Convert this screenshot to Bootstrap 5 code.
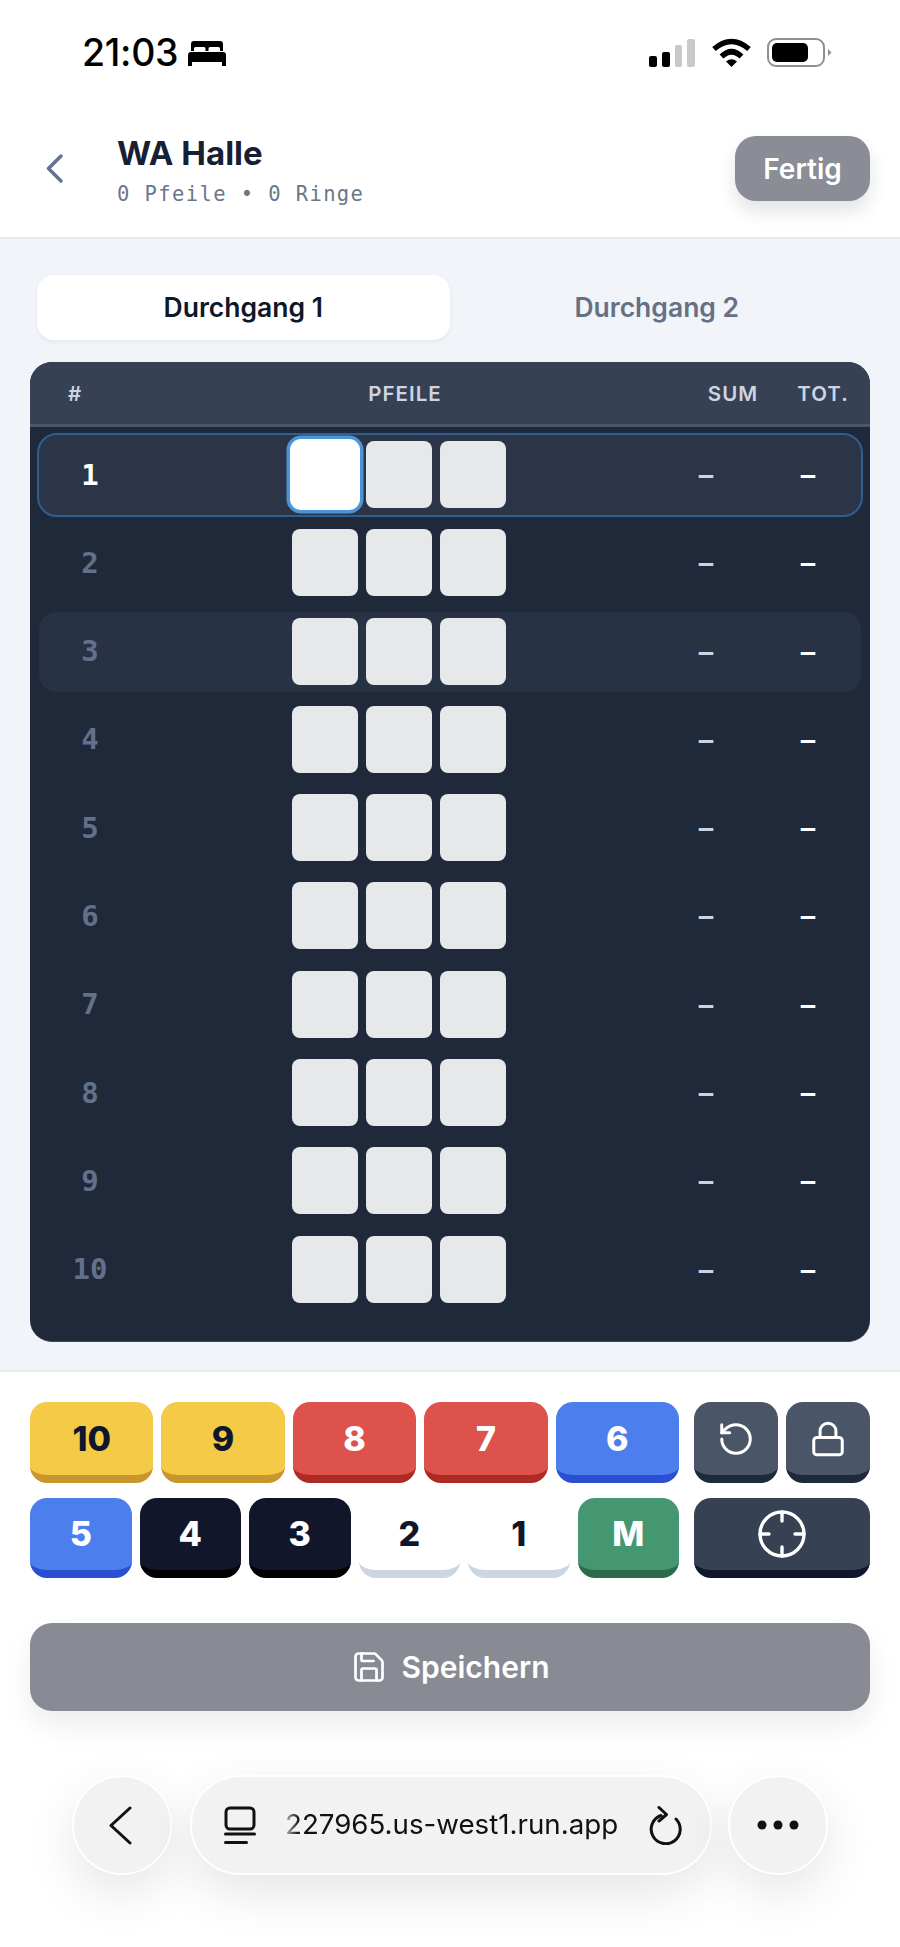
<!DOCTYPE html>
<html lang="de">

<head>
    <meta charset="UTF-8" />
    <title>WA Halle</title>
    <link href="https://cdn.jsdelivr.net/npm/bootstrap@5.3.2/dist/css/bootstrap.min.css" rel="stylesheet" />
    <style>
        body { width: 900px; height: 1947px; overflow: hidden; background: #fff; font-family: "Inter", "Liberation Sans", sans-serif; }
        .mono { font-family: "DejaVu Sans Mono", "Liberation Mono", monospace; }

        .status-row { height: 106px; padding: 38px 68px 0 82px; }
        .status-time { font-size: 37.5px; line-height: 30px; font-weight: 500; color: #000; letter-spacing: -.3px; margin-right: 2px; }

        .top-nav { height: 133px; padding: 30px 30px 0 46px; border-bottom: 2px solid #e6e9ef; }
        .back-link { width: 71px; padding-top: 2px; }
        .title-main { font-size: 33px; line-height: 38px; font-weight: 700; color: #172033; margin: -2px 0 8px; }
        .title-sub { font-size: 20.5px; line-height: 28px; letter-spacing: 1.4px; color: #6b7688; }
        .done-btn { width: 135px; height: 65px; border: 0; border-radius: 21px; background: #8a8c96; color: #fff; font-size: 28px; font-weight: 600; box-shadow: 0 10px 18px rgba(15, 23, 42, .12); }

        .main-area { height: 1133px; padding: 36px 30px 0; background: #f1f4f9; border-bottom: 2px solid #e8ebf0; }
        .tab-row { height: 65px; padding: 0 7px; margin-bottom: 22px; }
        .tab-item { flex: 1 1 0; padding-top: 1px; border-radius: 17px; font-size: 26.5px; font-weight: 600; color: #667085; }
        .tab-item.on { background: #fff; color: #0f172a; box-shadow: 0 2px 5px rgba(15, 23, 42, .06); margin-right: 1px; }

        .score-card { height: 980px; border-radius: 22px; background: #1f293a; overflow: hidden; border-bottom: 1px solid #3a4559; }
        .score-head { height: 65px; padding-top: 3px; background: #364153; border-bottom: 3px solid #4a5567; color: #cdd5e1; font-size: 20.5px; font-weight: 600; letter-spacing: 1px; display: grid; grid-template-columns: 90px 1fr 86px 94px; align-items: center; text-align: center; }
        .score-body { padding: 6px 7px 0; display: flex; flex-direction: column; gap: 4.3px; }
        .score-row { height: 84px; border: 2px solid transparent; border-radius: 20px; background-clip: padding-box; display: grid; grid-template-columns: 102px 1fr 98px 106px; align-items: center; text-align: center; }
        .score-row.on { background-color: #2b3547; border-color: #2e5f93; background-clip: border-box; }
        .score-row.tint { background-color: #283245; }
        .row-no { font-size: 29px; font-weight: 700; line-height: 1; color: #64708a; }
        .score-row.on .row-no { color: #fff; }
        .arrow-cells { display: flex; justify-content: center; gap: 7.5px; margin-top: -1px; }
        .arrow-cell { width: 66.5px; height: 67px; border-radius: 8px; background: #e7e8ea; }
        .arrow-cell.on { background: #fff; box-shadow: 0 0 0 2px #fff, 0 0 0 5.5px #4b95d6; border-radius: 9px; }
        .val-sum, .val-tot { font-size: 24px; font-weight: 700; line-height: 1; }
        .val-sum { color: #cbd5e1; }
        .val-tot { color: #fff; }

        .pad-area { padding: 30px 30px 0; }
        .pad-row { display: flex; gap: 15px; }
        .pad-row + .pad-row { margin-top: 15px; }
        .pad-left { flex: 0 0 649px; display: grid; gap: 8px; grid-template-columns: repeat(5, 1fr); }
        .pad-row + .pad-row .pad-left { grid-template-columns: repeat(6, 1fr); }
        .pad-right { flex: 1; display: flex; gap: 8px; }
        .pad-key { flex: 1; height: 81px; padding: 0; border: 0; border-bottom: 8px solid; border-radius: 17px; font-size: 34px; font-weight: 800; line-height: 1; display: flex; align-items: center; justify-content: center; }
        .pad-row + .pad-row .pad-key { height: 80px; }
        .key-gold { background: #f4ca47; border-color: #c8962c; color: #0f172a; }
        .key-red { background: #dd524b; border-color: #ae2a25; color: #fff; }
        .key-blue { background: #4c7eee; border-color: #2a4fd0; color: #fff; }
        .key-dark { background: #11162a; border-color: #000; color: #fff; }
        .key-white { background: #fff; border-color: #cdd6e0; color: #0f172a; }
        .key-green { background: #449770; border-color: #2c6a4b; color: #fff; }
        .key-slate { background: #4b5568; border-color: #1e293b; color: #fff; }
        .key-steel { background: #374154; border-color: #0f172a; color: #fff; }

        .save-btn { width: 100%; height: 88px; margin-top: 45px; border: 0; border-radius: 22px; background: #888a94; color: #fff; font-size: 30px; font-weight: 600; gap: 15px; box-shadow: 0 14px 28px rgba(15, 23, 42, .08); }

        .browser-bar { margin: 64px 73px 0 72px; height: 100px; }
        .bar-pill { height: 100px; background: #f2f2f3; border: 2px solid #fff; border-radius: 50px; box-shadow: 0 18px 50px rgba(0, 0, 0, .1); }
        .bar-round { width: 100px; flex: 0 0 100px; }
        .bar-url { flex: 1; margin: 0 16px 0 18px; padding: 0 28px 0 32px; }
        .url-text { width: 334px; margin: 0 30px 0 29px; font-size: 27.7px; color: #111; white-space: nowrap; overflow: hidden; -webkit-mask-image: linear-gradient(90deg, rgba(0, 0, 0, .25) 0, #000 14px); mask-image: linear-gradient(90deg, rgba(0, 0, 0, .25) 0, #000 14px); }
    </style>
</head>

<body>
    <div class="status-row d-flex justify-content-between align-items-start">
        <div class="d-flex align-items-center gap-2">
            <span class="status-time">21:03</span>
            <svg width="38" height="25" viewBox="0 0 38 25" fill="#000">
                <path d="M6 0h26a3 3 0 0 1 3 3v7h-3V7.500a1.500 1.500 0 0 0-1.500-1.500H22a1.500 1.500 0 0 0-1.500 1.500V10h-3V7.500A1.500 1.500 0 0 0 16 6H7.500A1.500 1.500 0 0 0 6 7.500V10H3V3a3 3 0 0 1 3-3z" />
                <path d="M3 11h32a3 3 0 0 1 3 3v7H0v-7a3 3 0 0 1 3-3zM0 21h4v4H0zM34 21h4v4h-4z" />
            </svg>
        </div>
        <div class="d-flex align-items-start">
            <svg width="46" height="28" viewBox="0 0 46 28" style="margin-right:16px;margin-top:1px">
                <rect x="0" y="17" width="8" height="11" rx="2" fill="#000" />
                <rect x="13" y="13" width="8" height="15" rx="2" fill="#000" />
                <rect x="26" y="6" width="7" height="22" rx="2" fill="#c9c9c9" />
                <rect x="38" y="0" width="8" height="28" rx="2" fill="#c9c9c9" />
            </svg>
            <svg width="41" height="29" viewBox="0 0 39 29" fill="none" stroke="#000" stroke-width="5.500">
                <path d="M2 11Q19.500-4 37 11" />
                <path d="M9.500 18.500Q19.500 9 29.500 18.500" />
                <path d="M14 23.500Q19.500 19 25 23.500L19.500 29z" fill="#000" stroke="none" />
            </svg>
            <svg width="65" height="29" viewBox="0 0 65 29" style="margin-left:15px">
                <rect x="1" y="1" width="56" height="27" rx="8" fill="none" stroke="#8f8f8f" stroke-width="2" />
                <rect x="5" y="5" width="36" height="19" rx="5" fill="#000" />
                <path d="M61 11l3.500 3.500-3.500 3.500z" fill="#8f8f8f" />
            </svg>
        </div>
    </div>

    <div class="top-nav d-flex align-items-start">
        <div class="back-link">
            <svg width="17" height="29" viewBox="0 0 17 29" fill="none" stroke="#64748b" stroke-width="3.500" stroke-linecap="round" stroke-linejoin="round" class="mt-3">
                <path d="M15 2L2.500 14.500 15 27" />
            </svg>
        </div>
        <div class="flex-grow-1">
            <div class="title-main">WA Halle</div>
            <div class="title-sub mono">0 Pfeile • 0 Ringe</div>
        </div>
        <button class="done-btn">Fertig</button>
    </div>

    <div class="main-area">
        <div class="tab-row d-flex">
            <div class="tab-item on d-flex align-items-center justify-content-center">Durchgang 1</div>
            <div class="tab-item d-flex align-items-center justify-content-center">Durchgang 2</div>
        </div>
        <div class="score-card">
            <div class="score-head">
                <div>#</div>
                <div>PFEILE</div>
                <div>SUM</div>
                <div>TOT.</div>
            </div>
            <div class="score-body" id="score-rows"></div>
        </div>
    </div>

    <div class="pad-area">
        <div class="pad-row">
            <div class="pad-left">
                <button class="btn pad-key key-gold">10</button>
                <button class="btn pad-key key-gold">9</button>
                <button class="btn pad-key key-red">8</button>
                <button class="btn pad-key key-red">7</button>
                <button class="btn pad-key key-blue">6</button>
            </div>
            <div class="pad-right">
                <button class="btn pad-key key-slate" aria-label="Rückgängig">
                    <svg width="38" height="38" viewBox="0 0 24 24" fill="none" stroke="#fff" stroke-width="1.900" stroke-linecap="round" stroke-linejoin="round">
                        <path d="M3 12a9 9 0 1 0 9-9 9.750 9.750 0 0 0-6.740 2.740L3 8" />
                        <path d="M3 3v5h5" />
                    </svg>
                </button>
                <button class="btn pad-key key-slate" aria-label="Sperren">
                    <svg width="38" height="38" viewBox="0 0 24 24" fill="none" stroke="#fff" stroke-width="1.900" stroke-linecap="round" stroke-linejoin="round">
                        <rect x="3" y="11" width="18" height="11" rx="2" />
                        <path d="M7 11V7a5 5 0 0 1 10 0v4" />
                    </svg>
                </button>
            </div>
        </div>
        <div class="pad-row">
            <div class="pad-left">
                <button class="btn pad-key key-blue">5</button>
                <button class="btn pad-key key-dark">4</button>
                <button class="btn pad-key key-dark">3</button>
                <button class="btn pad-key key-white">2</button>
                <button class="btn pad-key key-white">1</button>
                <button class="btn pad-key key-green">M</button>
            </div>
            <div class="pad-right">
                <button class="btn pad-key key-steel" aria-label="Scheibe">
                    <svg width="48" height="48" viewBox="0 0 24 24" fill="none" stroke="#fff" stroke-width="1.700" stroke-linecap="round">
                        <circle cx="12" cy="12" r="11" />
                        <path d="M23 12h-4.500M5.500 12H1M12 5.500V1M12 23v-4.500" />
                    </svg>
                </button>
            </div>
        </div>
        <button class="save-btn d-flex align-items-center justify-content-center">
            <svg width="36" height="36" viewBox="0 0 24 24" fill="none" stroke="#fff" stroke-width="1.800" stroke-linecap="round" stroke-linejoin="round">
                <path d="M15.200 3a2 2 0 0 1 1.400.6l3.800 3.800a2 2 0 0 1 .6 1.400V19a2 2 0 0 1-2 2H5a2 2 0 0 1-2-2V5a2 2 0 0 1 2-2z" />
                <path d="M17 21v-7a1 1 0 0 0-1-1H8a1 1 0 0 0-1 1v7" />
                <path d="M7 3v4a1 1 0 0 0 1 1h7" />
            </svg>
            Speichern
        </button>
    </div>

    <div class="browser-bar d-flex">
        <div class="bar-pill bar-round d-flex align-items-center justify-content-center">
            <svg width="23" height="39" viewBox="0 0 23 39" fill="none" stroke="#111" stroke-width="3" stroke-linecap="round" stroke-linejoin="round" class="me-1">
                <path d="M21 2L2 19.500 21 37" />
            </svg>
        </div>
        <div class="bar-pill bar-url d-flex align-items-center">
            <svg width="32" height="38" viewBox="0 0 32 38" fill="none" stroke="#111" stroke-width="3" stroke-linecap="round">
                <rect x="2" y="2" width="28" height="21" rx="4" />
                <path d="M1.500 28h29M1.500 36.500h21" />
            </svg>
            <div class="url-text">227965.us-west1.run.app</div>
            <svg width="33" height="39" viewBox="0 0 33 39" fill="none" stroke="#111" stroke-width="3" stroke-linecap="round" stroke-linejoin="round">
                <path d="M12 9.500A14.500 14.500 0 1 0 27 13" />
                <path d="M14 1.500L21.500 8.500 14 15" transform="translate(-4 0)" />
            </svg>
        </div>
        <div class="bar-pill bar-round d-flex align-items-center justify-content-center">
            <svg width="42" height="10" viewBox="0 0 42 10" fill="#111">
                <circle cx="5" cy="5" r="4.500" />
                <circle cx="21" cy="5" r="4.500" />
                <circle cx="37" cy="5" r="4.500" />
            </svg>
        </div>
    </div>

    <script>
        const contenedor = document.getElementById("score-rows");
        for (let i = 1; i <= 10; i++) {
            const fila = document.createElement("div");
            fila.className = "score-row" + (i === 1 ? " on" : "") + (i === 3 ? " tint" : "");
            fila.innerHTML = `
                <div class="row-no mono">${i}</div>
                <div class="arrow-cells">
                    <div class="arrow-cell ${i === 1 ? "on" : ""}"></div>
                    <div class="arrow-cell"></div>
                    <div class="arrow-cell"></div>
                </div>
                <div class="val-sum mono">–</div>
                <div class="val-tot mono">–</div>
            `;
            contenedor.appendChild(fila);
        }
    </script>
    <script src="https://cdn.jsdelivr.net/npm/bootstrap@5.3.2/dist/js/bootstrap.bundle.min.js"></script>
</body>

</html>
